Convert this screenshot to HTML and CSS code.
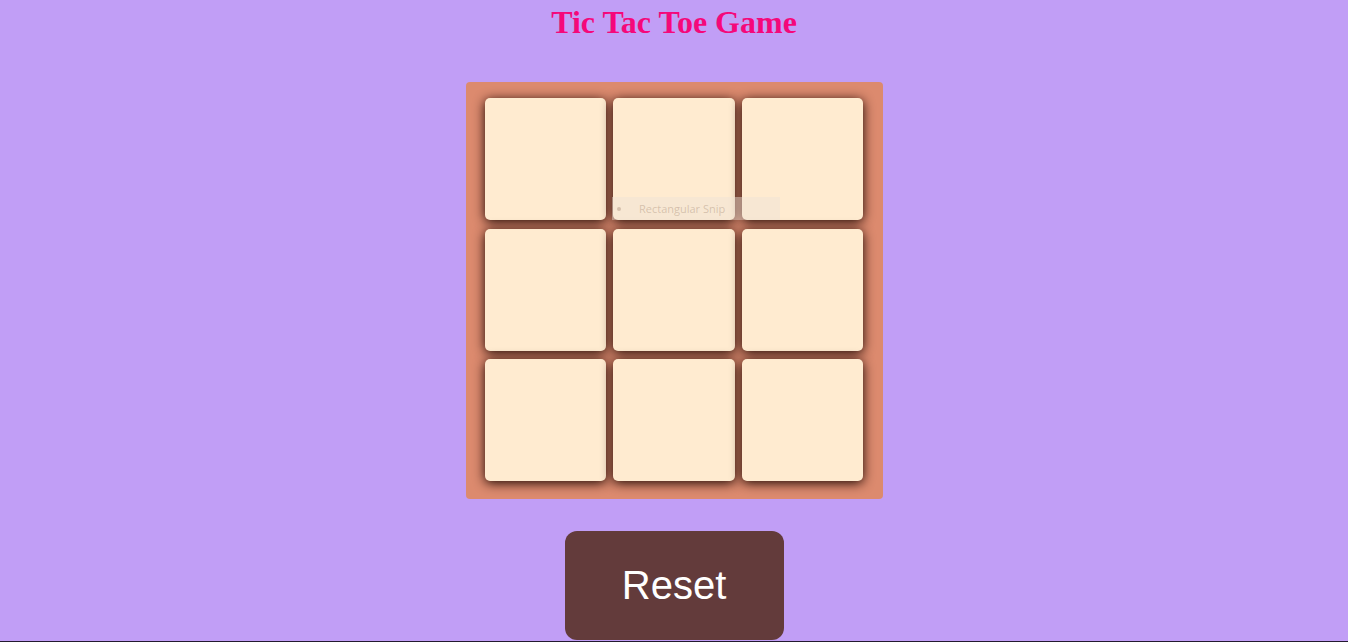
FILE: index.html
```html
<!DOCTYPE html>
<html lang="en">
<head>
<meta charset="UTF-8">
<title>Tic Tac Toe</title>
<link rel="stylesheet" href="styles.css">
</head>
<body>
<h1 class="title">Tic Tac Toe Game</h1>
<main class="container">
  <div class="game">
    <button class="box"></button>
    <button class="box"></button>
    <button class="box"></button>
    <button class="box"></button>
    <button class="box"></button>
    <button class="box"></button>
    <button class="box"></button>
    <button class="box"></button>
    <button class="box"></button>
  </div>
  <div class="snip"><span class="snip-dot"></span>Rectangular Snip</div>
</main>
<button class="reset">Reset</button>
<div class="taskbar"></div>
</body>
</html>
```
FILE: styles.css
```css
* { box-sizing: border-box; }
html, body { margin: 0; padding: 0; }
body {
  background: #c19ef6;
  text-align: center;
  height: 642px;
  overflow: hidden;
}
.title {
  margin: 0;
  padding-top: 4px;
  font-family: "Liberation Serif", "Times New Roman", serif;
  font-weight: bold;
  font-size: 32px;
  line-height: 37px;
  color: #f5087a;
}
.container {
  position: relative;
  display: flex;
  justify-content: center;
  margin-top: 41px;
}
.game {
  width: 417px;
  height: 417px;
  background: #dc8a6e;
  border-radius: 4px;
  padding: 16px 19px 18px 19px;
  display: grid;
  grid-template-columns: repeat(3, 1fr);
  grid-template-rows: repeat(3, 1fr);
  column-gap: 7px;
  row-gap: 8.5px;
}
.box {
  border: none;
  border-radius: 5px;
  background: #ffebd0;
  box-shadow: 0 2px 12px rgba(25, 5, 0, 1);
  padding: 0;
  margin: 0;
}
.snip {
  position: absolute;
  left: 612px;
  top: 115px;
  width: 168px;
  height: 23px;
  background: rgba(238, 226, 214, 0.45);
  font-family: "Open Sans", "DejaVu Sans", sans-serif;
  font-size: 11px;
  line-height: 23px;
  color: rgba(150, 120, 100, 0.35);
  text-align: left;
  padding-left: 27px;
}
.snip-dot {
  position: absolute;
  left: 5px;
  top: 10px;
  width: 4px;
  height: 4px;
  border-radius: 50%;
  background: rgba(150, 120, 100, 0.35);
}
.reset {
  display: block;
  margin: 32px auto 0;
  width: 219px;
  height: 109px;
  border: none;
  border-radius: 12px;
  background: #633b3b;
  color: #ffffff;
  font-family: "Liberation Sans", Arial, sans-serif;
  font-size: 40px;
}
.taskbar {
  position: fixed;
  left: 0;
  right: 0;
  bottom: 0;
  height: 1px;
  background: #231a30;
}
```
